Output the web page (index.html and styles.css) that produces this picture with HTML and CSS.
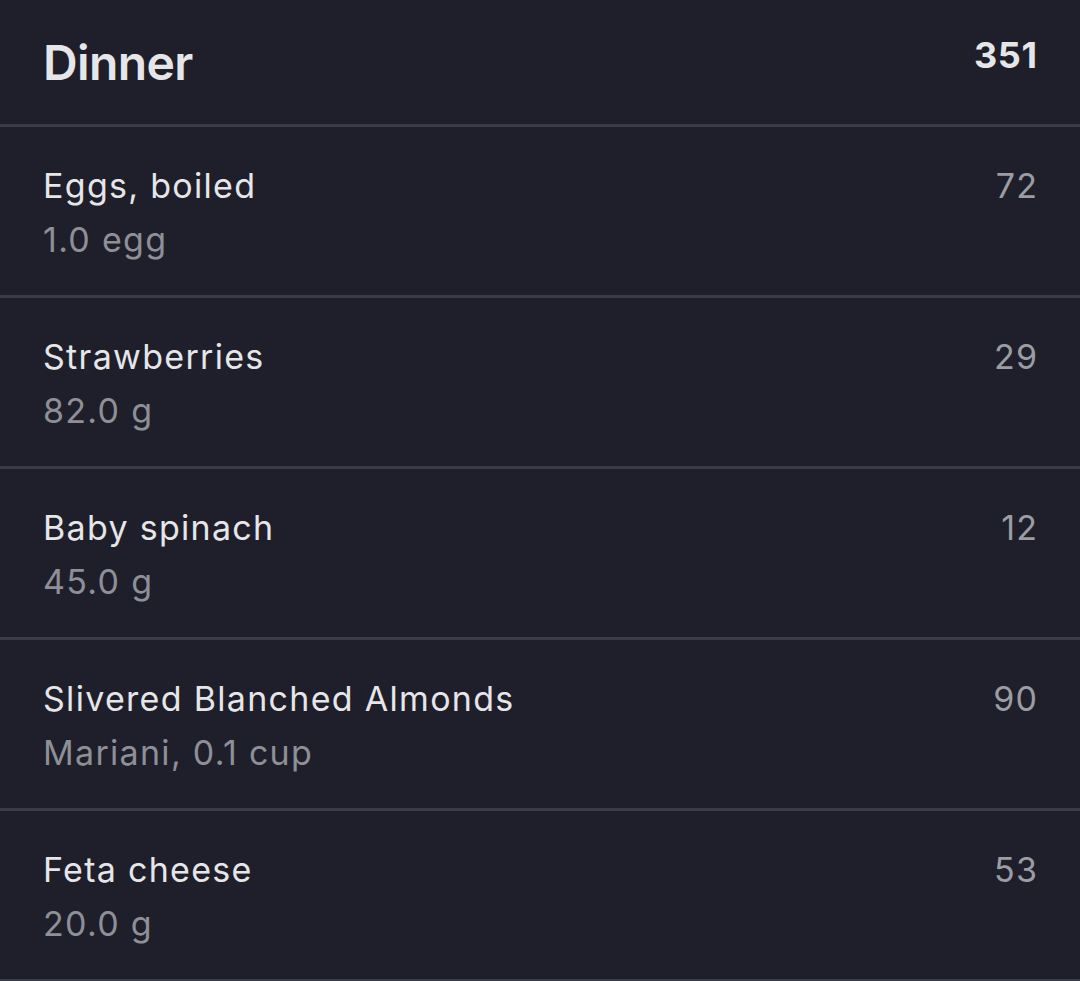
FILE: index.html
```html
<!DOCTYPE html>
<html lang="en">
<head>
<meta charset="utf-8">
<title>Dinner</title>
<link rel="stylesheet" href="styles.css">
</head>
<body>
<main class="meal">
  <header class="meal-header">
    <h1 class="meal-title">Dinner</h1>
    <span class="meal-total">351</span>
  </header>
  <ul class="food-list">
    <li class="food">
      <div class="food-info">
        <div class="food-name">Eggs, boiled</div>
        <div class="food-amount">1.0 egg</div>
      </div>
      <span class="food-cal">72</span>
    </li>
    <li class="food">
      <div class="food-info">
        <div class="food-name">Strawberries</div>
        <div class="food-amount">82.0 g</div>
      </div>
      <span class="food-cal">29</span>
    </li>
    <li class="food">
      <div class="food-info">
        <div class="food-name">Baby spinach</div>
        <div class="food-amount">45.0 g</div>
      </div>
      <span class="food-cal">12</span>
    </li>
    <li class="food">
      <div class="food-info">
        <div class="food-name">Slivered Blanched Almonds</div>
        <div class="food-amount">Mariani, 0.1 cup</div>
      </div>
      <span class="food-cal">90</span>
    </li>
    <li class="food">
      <div class="food-info">
        <div class="food-name">Feta cheese</div>
        <div class="food-amount">20.0 g</div>
      </div>
      <span class="food-cal">53</span>
    </li>
  </ul>
</main>
</body>
</html>
```

FILE: styles.css
```css
* { box-sizing: border-box; }
html, body {
  margin: 0;
  padding: 0;
  background: #1e1f2a;
}
body {
  font-family: Inter, "Noto Sans", sans-serif;
  color: #e6e6e8;
}
.meal {
  width: 1080px;
}
.meal-header {
  height: 127px;
  display: flex;
  justify-content: space-between;
  align-items: flex-start;
  padding: 31px 43px 0 43px;
  border-bottom: 3px solid #393b47;
}
.meal-title {
  margin: 0;
  font-size: 48px;
  font-weight: 600;
  line-height: 64px;
  letter-spacing: -0.6px;
  color: #e6e6e8;
}
.meal-total {
  font-size: 36px;
  font-weight: 700;
  line-height: 48px;
  letter-spacing: 0.6px;
  margin-right: -0.6px;
  color: #e6e6e8;
}
.food-list {
  list-style: none;
  margin: 0;
  padding: 0;
}
.food {
  height: 171px;
  display: flex;
  justify-content: space-between;
  align-items: flex-start;
  padding: 36px 43px 0 43px;
  border-bottom: 3px solid #393b47;
}
.food-info {
  display: flex;
  flex-direction: column;
}
.food-name {
  font-size: 34px;
  line-height: 46px;
  letter-spacing: 1.3px;
  color: #e6e6e8;
}
.food-amount {
  font-size: 34px;
  line-height: 62px;
  letter-spacing: 1.3px;
  color: #8e8f97;
}
.food-cal {
  font-size: 34px;
  line-height: 46px;
  letter-spacing: 1.3px;
  margin-right: -1.3px;
  color: #9c9da3;
}
```
